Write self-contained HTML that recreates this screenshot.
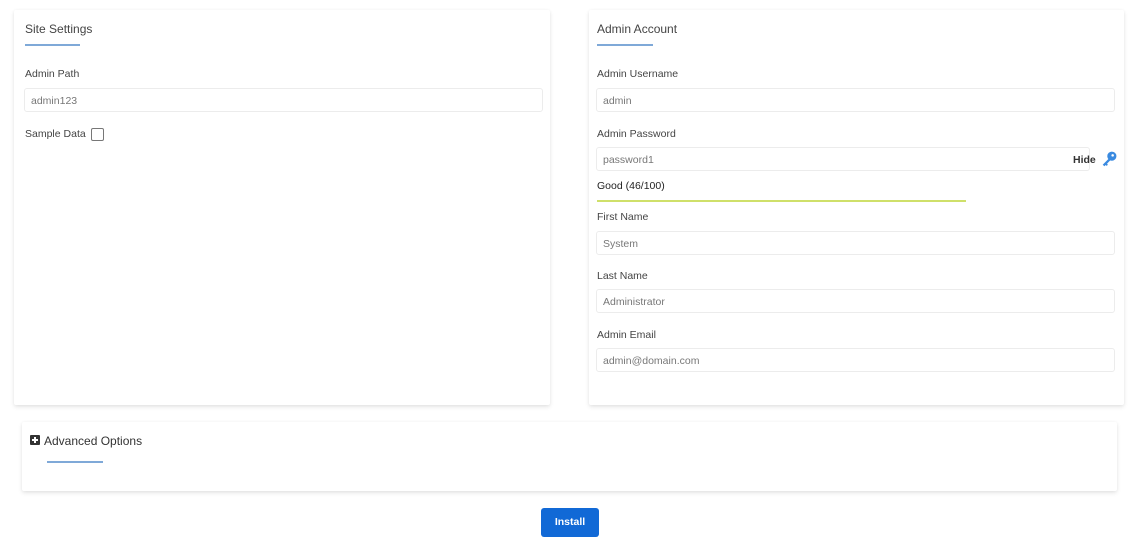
<!DOCTYPE html>
<html><head><meta charset="utf-8"><style>
*{box-sizing:border-box;margin:0;padding:0}
body{width:1140px;height:545px;background:#fff;font-family:"Liberation Sans",sans-serif;position:relative;overflow:hidden;color:#333}
.card{position:absolute;background:#fff;box-shadow:0 2px 4px rgba(0,0,0,.10),0 0 3px rgba(0,0,0,.04);border-radius:2px}
.a{position:absolute;white-space:nowrap}
.t{font-size:12px;color:#444}
.l{font-size:10.5px;color:#444}
.ul{position:absolute;height:2px;background:#7fa9d8}
.in{position:absolute;height:24px;border:1px solid #ececec;border-radius:3px;font-size:10.5px;color:#777;padding:6px 0 0 6px;background:#fff}
</style></head><body>
<div class="card" style="left:14px;top:10px;width:536px;height:395px"></div>
<div class="card" style="left:589px;top:10px;width:535px;height:395px"></div>
<div class="card" style="left:22px;top:422px;width:1095px;height:69px"></div>

<div class="a t" style="left:25px;top:22px">Site Settings</div>
<div class="ul" style="left:25px;top:44px;width:55px"></div>
<div class="a l" style="left:25px;top:68px">Admin Path</div>
<div class="in" style="left:24px;top:88px;width:519px">admin123</div>
<div class="a l" style="left:25px;top:128px">Sample Data</div>
<div class="a" style="left:91px;top:128px;width:13px;height:13px;border:1px solid #777;border-radius:2px"></div>

<div class="a t" style="left:597px;top:22px">Admin Account</div>
<div class="ul" style="left:597px;top:44px;width:56px"></div>
<div class="a l" style="left:597px;top:68px">Admin Username</div>
<div class="in" style="left:596px;top:88px;width:519px">admin</div>
<div class="a l" style="left:597px;top:128px">Admin Password</div>
<div class="in" style="left:596px;top:147px;width:494px">password1</div>
<div class="a" style="left:1073px;top:154px;font-size:10.5px;font-weight:bold;color:#333">Hide</div>
<svg class="a" style="left:1101px;top:151px" width="16" height="16" viewBox="0 0 14 14"><circle cx="9.5" cy="4.5" r="4" fill="#3a8ae0"/><circle cx="10.2" cy="3.8" r="1.1" fill="#fff"/><path d="M7 6.5 L1.5 12 L3 13.3 L4 12.3 L5 13 L6 12 L5.3 11 L8.3 8" fill="#3a8ae0"/></svg>
<div class="a" style="left:597px;top:180px;font-size:10.5px;color:#222">Good (46/100)</div>
<div class="a" style="left:597px;top:200px;width:369px;height:2px;background:#cfe06a"></div>
<div class="a l" style="left:597px;top:211px">First Name</div>
<div class="in" style="left:596px;top:231px;width:519px">System</div>
<div class="a l" style="left:597px;top:270px">Last Name</div>
<div class="in" style="left:596px;top:289px;width:519px">Administrator</div>
<div class="a l" style="left:597px;top:329px">Admin Email</div>
<div class="in" style="left:596px;top:348px;width:519px">admin@domain.com</div>

<div class="a" style="left:30px;top:435px;width:10px;height:10px;background:#333;border-radius:1px"></div>
<div class="a" style="left:32px;top:439px;width:6px;height:2px;background:#fff"></div>
<div class="a" style="left:34px;top:437px;width:2px;height:6px;background:#fff"></div>
<div class="a t" style="left:44px;top:434px;color:#333">Advanced Options</div>
<div class="ul" style="left:47px;top:461px;width:56px"></div>

<div class="a" style="left:541px;top:508px;width:58px;height:29px;background:#1169d6;border-radius:3px;color:#fff;font-size:10.5px;font-weight:bold;text-align:center;line-height:29px">Install</div>
</body></html>
